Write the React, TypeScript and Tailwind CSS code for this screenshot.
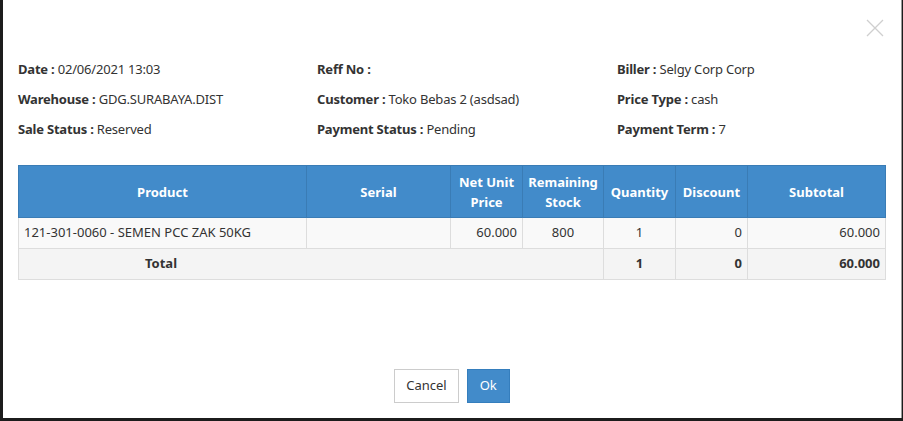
const INFO = [
  [
    ["Date", "02/06/2021 13:03"],
    ["Warehouse", "GDG.SURABAYA.DIST"],
    ["Sale Status", "Reserved"],
  ],
  [
    ["Reff No", ""],
    ["Customer", "Toko Bebas 2 (asdsad)"],
    ["Payment Status", "Pending"],
  ],
  [
    ["Biller", "Selgy Corp Corp"],
    ["Price Type", "cash"],
    ["Payment Term", "7"],
  ],
];

export default function App() {
  return (
    <div
      className="flex h-[421px] w-[903px] bg-[#1c1c1c] pl-[3px] pr-[5px] pb-[3px] text-[13px] text-[#333]"
      style={{ fontFamily: '"Noto Sans", "Open Sans", sans-serif' }}
    >
      <div className="relative flex flex-1 flex-col bg-white border-r border-[#9a9a9a]">
        {/* close */}
        <button className="absolute right-[17px] top-[19px] text-[#cfcfcf]">
          <svg width="18" height="18" viewBox="0 0 18 18" fill="none" stroke="currentColor" strokeWidth="1.3">
            <path d="M1 1L17 17M17 1L1 17" />
          </svg>
        </button>

        {/* Info */}
        <div className="grid grid-cols-[299px_300px_1fr] px-[15px] pt-[59px]">
          {INFO.map((col, i) => (
            <div key={i} className="flex flex-col gap-[10px]">
              {col.map(([label, value]) => (
                <p key={label} className="leading-[20px] tracking-[-0.2px]">
                  <span className="font-bold">{label} :</span> {value}
                </p>
              ))}
            </div>
          ))}
        </div>

        {/* Table */}
        <div className="mt-[26px] px-[15px]">
          <table className="w-[868px] border-collapse">
            <thead>
              <tr className="bg-[#428bca] text-white font-bold leading-[20px]">
                <th className="w-[288px] border border-[#3a7cb5] h-[52px]">Product</th>
                <th className="w-[144px] border border-[#3a7cb5]">Serial</th>
                <th className="w-[72px] border border-[#3a7cb5]">Net Unit Price</th>
                <th className="w-[81px] border border-[#3a7cb5]">Remaining Stock</th>
                <th className="w-[72px] border border-[#3a7cb5]">Quantity</th>
                <th className="w-[72px] border border-[#3a7cb5]">Discount</th>
                <th className="border border-[#3a7cb5]">Subtotal</th>
              </tr>
            </thead>
            <tbody>
              <tr className="bg-[#f9f9f9] h-[31px]">
                <td className="border border-[#ddd] px-[5px]">121-301-0060 - SEMEN PCC ZAK 50KG</td>
                <td className="border border-[#ddd]"></td>
                <td className="border border-[#ddd] px-[5px] text-right">60.000</td>
                <td className="border border-[#ddd] text-center">800</td>
                <td className="border border-[#ddd] text-center">1</td>
                <td className="border border-[#ddd] px-[5px] text-right">0</td>
                <td className="border border-[#ddd] px-[5px] text-right">60.000</td>
              </tr>
              <tr className="bg-[#f4f4f4] h-[31px] font-bold">
                <td colSpan={4} className="border border-[#ddd] text-center pr-[300px]">
                  Total
                </td>
                <td className="border border-[#ddd] text-center">1</td>
                <td className="border border-[#ddd] px-[5px] text-right">0</td>
                <td className="border border-[#ddd] px-[5px] text-right">60.000</td>
              </tr>
            </tbody>
          </table>
        </div>

        {/* Footer */}
        <div className="mt-auto mb-[15px] flex justify-center gap-[8px]">
          <button className="h-[34px] border border-[#ccc] bg-white px-[11px] text-[#333]">
            Cancel
          </button>
          <button className="h-[34px] border border-[#357ebd] bg-[#428bca] px-[12px] text-white">
            Ok
          </button>
        </div>
      </div>
    </div>
  );
}
